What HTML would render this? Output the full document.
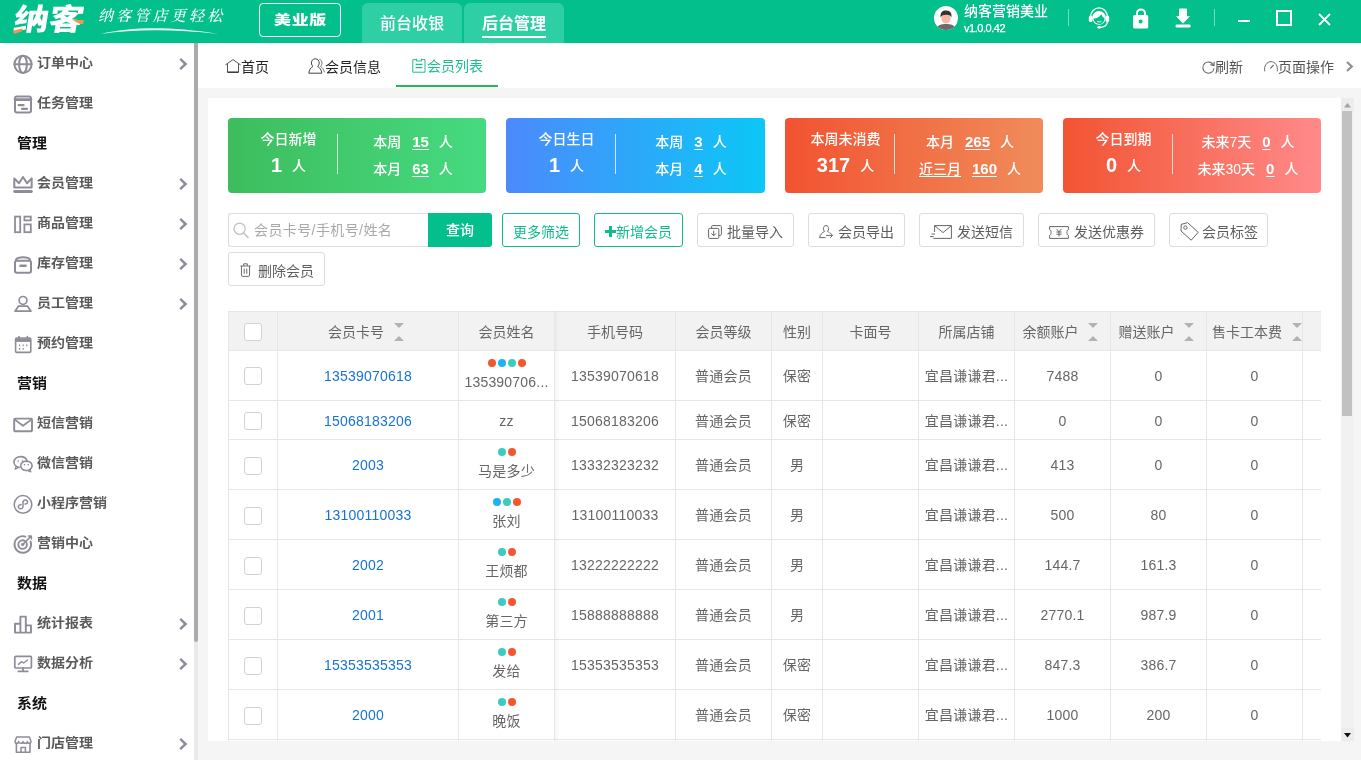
<!DOCTYPE html>
<html lang="zh-CN">
<head>
<meta charset="utf-8">
<title>纳客 - 会员列表</title>
<style>
*{box-sizing:border-box;margin:0;padding:0}
html,body{width:1361px;height:760px;overflow:hidden;background:#f5f5f5}
body{position:relative;will-change:transform;transform:translateZ(0);font-family:"Liberation Sans","Noto Sans CJK SC",sans-serif;font-size:14px;color:#666;line-height:20px}
.abs{position:absolute}
svg{display:block;overflow:visible}
i{font-style:normal}

/* ---------- header ---------- */
#hd{position:absolute;left:0;top:0;width:1361px;height:43px;background:#02bf8b;color:#fff}
#logo{position:absolute;left:14px;top:0px;width:76px;height:40px;font-size:30px;font-weight:900;line-height:40px;white-space:nowrap;transform:skewX(-9deg) scaleX(1.17);transform-origin:0 50%}
#slogan{position:absolute;left:98px;top:5px;width:130px;height:22px;font-family:"Liberation Serif","Noto Serif CJK SC",serif;font-style:italic;font-size:15px;line-height:22px;letter-spacing:3.2px;white-space:nowrap;font-weight:500}
#edition{position:absolute;left:259px;top:3px;width:82px;height:34px;border:1px solid #fff;border-radius:4px;text-align:center}#edition span{display:block;font-size:17px;font-weight:900;line-height:32px;letter-spacing:.6px;padding-left:1px;transform:scaleY(.75);transform-origin:50% 50%}
.htab{position:absolute;top:3px;width:100px;height:40px;background:#2fcfa5;border-radius:6px 6px 0 0;font-size:16px;line-height:42px;text-align:center;font-weight:500}
#uname{position:absolute;left:964px;top:1px;font-size:14px;font-weight:500;line-height:20px;white-space:nowrap}
#uver{position:absolute;left:964px;top:20px;font-size:11px;font-weight:normal;line-height:16px;white-space:nowrap;letter-spacing:-.45px;-webkit-text-stroke:.25px #fff}
.vdiv{position:absolute;top:9px;width:1px;height:17px;background:rgba(255,255,255,.45)}

/* ---------- sidebar ---------- */
#sb{position:absolute;left:0;top:43px;width:194px;height:717px;background:#fff;overflow:hidden}
.mi{position:absolute;left:0;width:194px;height:40px}
.mi .ic{position:absolute;left:13px;top:11px;width:20px;height:20px;fill:none;stroke:#8d8d9a;stroke-width:2;stroke-linejoin:round;stroke-linecap:round}
.mi .tx{position:absolute;left:37px;top:0;line-height:39px;transform:scaleY(.92);transform-origin:0 52%;font-size:14px;font-weight:bold;color:#5a5a5a;white-space:nowrap}
.mi .ar{position:absolute;left:179px;top:15.4px;width:8px;height:12px;fill:none;stroke:#8d8d9a;stroke-width:2.5}
.mh{position:absolute;left:17px;height:40px;line-height:40px;transform:scaleY(.92);transform-origin:0 52%;font-size:15px;font-weight:bold;color:#111;white-space:nowrap}
#sbt{position:absolute;left:194px;top:43px;width:4px;height:717px;background:#e9e9e9}
#sbb{position:absolute;left:194px;top:43px;width:4px;height:599px;background:#ababab;border-radius:0 0 2px 2px}

/* ---------- tab bar ---------- */
#tb{position:absolute;left:198px;top:43px;width:1163px;height:45px;background:#fff}
.tt{position:absolute;top:0;height:45px;line-height:48px;font-size:14px;color:#222;white-space:nowrap}
.tb-ic{position:absolute;fill:none;stroke:#444;stroke-width:1}

/* ---------- panel ---------- */
#pn{position:absolute;left:208px;top:98px;width:1146px;height:643px;background:#fff;overflow:hidden}
.card{position:absolute;top:20px;width:258px;height:75px;border-radius:4px;color:#fff;font-size:14px;font-weight:500}
.card .l{position:absolute;left:0;width:121px;text-align:center;white-space:nowrap}
.card .r{position:absolute;left:110px;width:150px;text-align:center;white-space:nowrap}
.card .dv{position:absolute;left:109px;top:16px;width:1px;height:40px;background:rgba(255,255,255,.75)}
.card .big{font-size:20px;font-weight:bold;margin-right:10px;vertical-align:-1px}
.card u{font-weight:bold;margin:0 10px 0 11px;font-size:15px;text-decoration:underline;text-underline-offset:2px}

.btn{position:absolute;top:115px;height:34px;border:1px solid #ddd;border-radius:3px;background:#fff;font-size:14px;color:#5e5e5e;line-height:36px;white-space:nowrap}
.btn svg{position:absolute;fill:none;stroke:#666;stroke-width:1}
.btn span{position:absolute;top:0}
.btn.g{border-color:#0ebd8c;color:#0ebd8c}

/* ---------- table ---------- */
#tbl{position:absolute;left:20px;top:213px;width:1093px;height:440px;overflow:hidden}
.hr{position:absolute;left:0;top:0;width:1093px;height:40px;background:#f2f2f2}
.vl{position:absolute;top:0;width:1px;height:440px;background:#e6e6e6}
.hl{position:absolute;left:0;width:1093px;height:1px;background:#e6e6e6}
.th{position:absolute;top:0;height:40px;line-height:42px;text-align:center;color:#666;white-space:nowrap}
.td{position:absolute;text-align:center;white-space:nowrap;color:#666;line-height:20px;height:20px;letter-spacing:.2px}
.cb{position:absolute;left:16px;width:18px;height:18px;border:1px solid #d2d2d2;border-radius:3px;background:#fff}
.sort{position:absolute;top:12px;width:10px;height:18px}
.sort:before{content:"";position:absolute;left:0;top:0;border:5px solid transparent;border-top-color:#b2b2b2;border-bottom-width:0}
.sort:after{content:"";position:absolute;left:0;top:13px;border:5px solid transparent;border-bottom-color:#b2b2b2;border-top-width:0}
.lnk{color:#1673d3}
.dots{position:absolute;height:8px;font-size:0;line-height:0;text-align:center}
.dots i{display:inline-block;width:8px;height:8px;border-radius:50%;margin:0 1px}
.d1{background:#f4562e}.d2{background:#1eb0f8}.d3{background:#3ccbbf}
</style>
</head>
<body>

<!-- ================= HEADER ================= -->
<div id="hd">
  <div id="logo">纳客</div>
  <div id="slogan">纳客管店更轻松</div>
  <svg class="abs" style="left:100px;top:26px" width="120" height="10" viewBox="0 0 120 10"><path d="M1 8 C30 1 70 0 118 8 C75 3 35 3 1 8Z" fill="#fff" opacity=".9"/></svg>
  <svg class="abs" style="left:12px;top:18px" width="74" height="18" viewBox="0 0 74 18"><path d="M1 12.4L10.6 10.6L10 13.2L2 16Z" fill="#f5924e"/><path d="M59.6 1.2L72 2.6L71.2 6.2L66.6 5.6Z" fill="#f5924e"/></svg>
  <div id="edition"><span>美业版</span></div>
  <div class="htab" style="left:362px">前台收银</div>
  <div class="htab" style="left:464px;font-weight:bold">后台管理<div class="abs" style="left:18px;top:33px;width:64px;height:2px;background:#fff"></div></div>

  <svg class="abs" style="left:934px;top:6px" width="24" height="24" viewBox="0 0 24 24">
    <defs><clipPath id="avc"><circle cx="12" cy="12" r="12"/></clipPath></defs>
    <circle cx="12" cy="12" r="12" fill="#fff"/>
    <g clip-path="url(#avc)">
      <path d="M2 26 C2 19 7 18 12 18 C17 18 22 19 22 26Z" fill="#6b6b6b"/>
      <ellipse cx="12" cy="12.2" rx="4.6" ry="5.4" fill="#f6b7a5"/>
      <path d="M6.6 11.5 C6 6 9 4.4 12.4 4.6 C16.5 4.6 18 7.5 17.4 11.5 C16.6 9.6 15.6 8.6 12 8.8 C9.2 8.8 7.6 9.4 6.6 11.5Z" fill="#333"/>
    </g>
  </svg>
  <div id="uname">纳客营销美业</div>
  <div id="uver">v1.0.0.42</div>
  <div class="vdiv" style="left:1068px"></div>

  <!-- headset -->
  <svg class="abs" style="left:1088px;top:6px" width="22" height="24" viewBox="0 0 22 24">
    <path d="M2.6 10.8 A8.4 9 0 0 1 19.4 10.8" fill="none" stroke="#fff" stroke-width="1.3"/>
    <circle cx="11" cy="11.8" r="6.9" fill="#fff"/>
    <path d="M5.6 12.6 C8.4 12.4 11.6 11 13.6 8.2 C14.2 10.4 15.4 11.8 16.6 12.2 C16.4 16 14 18 11.2 18 C8.2 18 5.8 16 5.6 12.6Z" fill="#02bf8b"/>
    <path d="M9.2 15.2 C10.4 16.2 12.2 16.2 13.4 15.2" fill="none" stroke="#fff" stroke-width="1"/>
    <rect x="0.8" y="9.4" width="3.6" height="6.6" rx="1.6" fill="#fff"/>
    <rect x="17.6" y="9.4" width="3.6" height="6.6" rx="1.6" fill="#fff"/>
    <path d="M19.4 15.6 C19.2 19.4 16 21.2 12 21.4" fill="none" stroke="#fff" stroke-width="1.2"/>
    <ellipse cx="11.2" cy="21.3" rx="1.9" ry="1.4" fill="#fff"/>
  </svg>
  <!-- lock -->
  <svg class="abs" style="left:1133px;top:8px" width="16" height="21" viewBox="0 0 16 21">
    <path d="M4 8 V5.4 A4 4 0 0 1 12 5.4 V8" fill="none" stroke="#fff" stroke-width="2"/>
    <rect x="0" y="7" width="15.2" height="13.6" rx="1.6" fill="#fff"/>
    <circle cx="7.6" cy="13.6" r="2" fill="#02bf8b"/>
  </svg>
  <!-- download -->
  <svg class="abs" style="left:1175px;top:8px" width="16" height="20" viewBox="0 0 16 20">
    <path d="M5 0.4 H11 Q12 0.4 12 1.4 V8.2 H15 L8 15.6 L1 8.2 H4 V1.4 Q4 0.4 5 0.4Z" fill="#fff"/>
    <rect x="0.6" y="16.4" width="15" height="3" rx="1.2" fill="#fff"/>
  </svg>
  <div class="vdiv" style="left:1214px"></div>
  <!-- window buttons -->
  <div class="abs" style="left:1238px;top:20px;width:12px;height:2px;background:#fff"></div>
  <div class="abs" style="left:1276px;top:10px;width:16px;height:16px;border:2px solid #fff"></div>
  <svg class="abs" style="left:1318px;top:13px" width="13" height="13" viewBox="0 0 13 13"><path d="M1 1 L12 12 M12 1 L1 12" stroke="#fff" stroke-width="1.8" fill="none"/></svg>
</div>

<!-- ================= SIDEBAR ================= -->
<div id="sb">
  <div class="mi" style="top:0px"><svg class="ic" viewBox="0 0 20 20"><circle cx="10" cy="10.3" r="8.6"/><ellipse cx="10" cy="10.3" rx="3.9" ry="8.6"/><path d="M1.4 10.3H18.6"/></svg><span class="tx">订单中心</span><svg class="ar" viewBox="0 0 8 12"><path d="M1.2 0.8L6.6 6L1.2 11.2"/></svg></div>
  <div class="mi" style="top:40px"><svg class="ic" viewBox="0 0 20 20"><rect x="2" y="2.4" width="16" height="16.2" rx="2"/><path d="M2 5.6H18" stroke-width="2.6"/><path d="M5.6 11.2H10.6M9 14.8H14" stroke-width="2.2"/></svg><span class="tx">任务管理</span></div>
  <div class="mh" style="top:80px">管理</div>
  <div class="mi" style="top:120px"><svg class="ic" viewBox="0 0 20 20"><path d="M1.3 4.4L6 9.2L10 3L14 9.2L18.7 4.4V13.4H1.3Z" stroke-width="2"/><path d="M1.6 17.5H18.4" stroke-width="2.8"/></svg><span class="tx">会员管理</span><svg class="ar" viewBox="0 0 8 12"><path d="M1.2 0.8L6.6 6L1.2 11.2"/></svg></div>
  <div class="mi" style="top:160px"><svg class="ic" viewBox="0 0 20 20"><rect x="2" y="2.6" width="5.2" height="15.6" stroke-width="1.8" stroke-linejoin="miter"/><rect x="11.4" y="2.6" width="6.4" height="3.8" stroke-width="1.8" stroke-linejoin="miter"/><rect x="11.4" y="10.4" width="6.4" height="7.8" stroke-width="1.8" stroke-linejoin="miter"/></svg><span class="tx">商品管理</span><svg class="ar" viewBox="0 0 8 12"><path d="M1.2 0.8L6.6 6L1.2 11.2"/></svg></div>
  <div class="mi" style="top:200px"><svg class="ic" viewBox="0 0 20 20"><path d="M3 5.6C5 2.4 15 2.4 17 5.6" /><rect x="2" y="6.8" width="16" height="12" rx="1.8"/><path d="M7.4 11.8H12.6" stroke-width="2.4"/></svg><span class="tx">库存管理</span><svg class="ar" viewBox="0 0 8 12"><path d="M1.2 0.8L6.6 6L1.2 11.2"/></svg></div>
  <div class="mi" style="top:240px"><svg class="ic" viewBox="0 0 20 20"><circle cx="10" cy="6.4" r="3.9" stroke-width="1.7"/><path d="M2 17.2L5.4 12.2H14.6L18 17.2Z" stroke-width="1.7"/></svg><span class="tx">员工管理</span><svg class="ar" viewBox="0 0 8 12"><path d="M1.2 0.8L6.6 6L1.2 11.2"/></svg></div>
  <div class="mi" style="top:280px"><svg class="ic" viewBox="0 0 20 20"><rect x="2.6" y="4" width="15.2" height="14.4" rx="1.2" stroke-width="1.6"/><path d="M2.6 6.2H17.8" stroke-width="3.4" stroke-linecap="butt"/><path d="M6 2.6V5M14.4 2.6V5" stroke-width="1.6"/><path d="M6 11.4H7.2M9.6 11.4H10.8M13.2 11.4H14.4M6 14.8H7.2M9.6 14.8H10.8" stroke-width="1.8" stroke-linecap="butt"/></svg><span class="tx">预约管理</span></div>
  <div class="mh" style="top:320px">营销</div>
  <div class="mi" style="top:360px"><svg class="ic" viewBox="0 0 20 20"><rect x="1.2" y="4.6" width="17.8" height="12.6" rx="0.8" stroke-width="1.9"/><path d="M1.8 5.6L10 11.8L18.4 5.6" stroke-width="1.8"/></svg><span class="tx">短信营销</span></div>
  <div class="mi" style="top:400px"><svg class="ic" viewBox="0 0 20 20"><path d="M6.2 13.4C3.4 13 1 10.8 1 8C1 5 4 2.6 7.6 2.6C10.8 2.6 13.4 4.4 14 6.8" stroke-width="1.6"/><path d="M3.2 12.4L2.2 15.2L5.2 13.6" stroke-width="1.3"/><ellipse cx="13.4" cy="11.8" rx="5.7" ry="4.7" stroke-width="1.6"/><path d="M16.8 15.6L17.8 17.8L14.8 16.6" stroke-width="1.3"/><path d="M5.2 7H5.4M9.4 7H9.6M11.4 10.8H11.6M15.2 10.8H15.4" stroke-width="1.6"/></svg><span class="tx">微信营销</span></div>
  <div class="mi" style="top:440px"><svg class="ic" viewBox="0 0 20 20"><circle cx="10" cy="10.4" r="8.8" stroke-width="1.5"/><path d="M10 12.6C10 15.6 5.2 15.4 5.4 12.6C5.5 11.2 6.8 10.6 8 10.8M10 12.6V8.2C10 5.2 14.8 5.4 14.6 8.2C14.5 9.6 13.2 10.2 12 10" stroke-width="1.5"/></svg><span class="tx">小程序营销</span></div>
  <div class="mi" style="top:480px"><svg class="ic" viewBox="0 0 20 20"><path d="M17.6 7.6A8.3 8.3 0 1 1 12.4 2.6" stroke-width="1.9"/><circle cx="9.6" cy="10.6" r="4.3" stroke-width="1.9"/><circle cx="9.6" cy="10.6" r="1.2" fill="#8d8d9a" stroke-width="1"/><path d="M10 10.2L17.6 2.6M15.4 2H18.4V5" stroke-width="1.5"/></svg><span class="tx">营销中心</span></div>
  <div class="mh" style="top:520px">数据</div>
  <div class="mi" style="top:560px"><svg class="ic" viewBox="0 0 20 20"><path d="M2 18.6V9.8H7.4V2.6H12.8V18.6M12.8 11.4H18V18.6H2M7.4 9.8V18.6" stroke-width="1.9"/></svg><span class="tx">统计报表</span><svg class="ar" viewBox="0 0 8 12"><path d="M1.2 0.8L6.6 6L1.2 11.2"/></svg></div>
  <div class="mi" style="top:600px"><svg class="ic" viewBox="0 0 20 20"><rect x="1.8" y="2.4" width="16.6" height="11.6" rx="1" stroke-width="1.7"/><path d="M10 14V17M5.4 17.4H14.8" stroke-width="1.8"/><path d="M5.4 10.4L8.6 7.6L10.6 9L14.6 6" stroke-width="1.4"/></svg><span class="tx">数据分析</span><svg class="ar" viewBox="0 0 8 12"><path d="M1.2 0.8L6.6 6L1.2 11.2"/></svg></div>
  <div class="mh" style="top:640px">系统</div>
  <div class="mi" style="top:680px"><svg class="ic" viewBox="0 0 20 20"><path d="M3.4 9.6V18.2H17V9.6" stroke-width="1.6"/><path d="M2 7.4L3.6 3H16.4L18 7.4C18 9.8 14.4 9.8 14.4 7.4C14.4 9.8 10 9.8 10 7.4C10 9.8 5.6 9.8 5.6 7.4C5.6 9.8 2 9.8 2 7.4Z" stroke-width="1.5"/><path d="M8 18V13.4H12.4V18" stroke-width="1.5"/></svg><span class="tx">门店管理</span><svg class="ar" viewBox="0 0 8 12"><path d="M1.2 0.8L6.6 6L1.2 11.2"/></svg></div>
</div>
<div id="sbt"></div><div id="sbb"></div>

<!-- ================= TAB BAR ================= -->
<div id="tb">
  <svg class="tb-ic" style="left:27px;top:16px" width="16" height="14" viewBox="0 0 16 14"><path d="M0.3 6L8 0.6L15.7 6" stroke-width=".9"/><path d="M2.5 5V13.2H13.5V5" stroke-width=".9"/><path d="M2.5 13.2H13.5" stroke="#222" stroke-width="1.1"/></svg>
  <div class="tt" style="left:43px">首页</div>
  <svg class="tb-ic" style="left:110px;top:15px" width="17" height="16" viewBox="0 0 17 16"><path d="M7.2 0.8C4.6 0.8 3.4 2.8 3.4 5C3.4 6.6 4.2 7.8 5 8.4C3 9.4 1 12 0.8 15.2H13.8C13.6 12 11.6 9.4 9.6 8.4C10.4 7.8 11.2 6.6 11.2 5C11.2 2.8 9.8 0.8 7.2 0.8Z"/><path d="M11.4 1.2C13.4 1.8 14 3.6 14 5C14 6.4 13.4 7.6 12.4 8.4C14.4 9.4 16 11.6 16.4 14.4" stroke="#777"/></svg>
  <div class="tt" style="left:127px">会员信息</div>
  <svg class="tb-ic" style="left:214px;top:15px;stroke:#1bbf8e" width="14" height="15" viewBox="0 0 14 15"><path d="M4.2 1.6H0.8V14.2H13V1.6H9.6"/><path d="M4.4 0.6V3H9.4V0.6" /><path d="M3.6 6.4H10.4M3.6 9.6H10.4" stroke-width="1.1"/></svg>
  <div class="tt" style="left:229px;color:#1bbf8e;line-height:46px">会员列表</div>
  <div class="abs" style="left:198px;top:42px;width:102px;height:2px;background:#2db55d"></div>

  <svg class="tb-ic" style="left:1004px;top:18px;stroke:#666" width="13" height="13" viewBox="0 0 13 13"><path d="M11.6 4.4A5.6 5.6 0 1 0 12 7.2" stroke-width="1.1"/><path d="M8.4 3.6L12 4.6L12.2 0.8" stroke-width="1.1"/></svg>
  <div class="tt" style="left:1017px;color:#555">刷新</div>
  <svg class="tb-ic" style="left:1066px;top:18px;stroke:#666" width="14" height="11" viewBox="0 0 14 11"><path d="M0.8 10.4C-0.4 5 3 0.6 7 0.6C11 0.6 14.4 5 13.2 10.4" stroke-width="1"/><path d="M6.4 7.4L9.6 4" stroke-width="1.1"/></svg>
  <div class="tt" style="left:1080px;color:#555">页面操作</div>
  <svg class="abs" style="left:1148px;top:18px" width="8" height="11" viewBox="0 0 8 11"><path d="M1 1L5.8 5.5L1 10" fill="none" stroke="#8d8d9a" stroke-width="2.2"/></svg>
</div>

<!-- ================= PANEL ================= -->
<div id="pn">
  <div class="card" style="left:20px;background:linear-gradient(90deg,#3dbd5d,#46da80)">
    <div class="l" style="top:11px">今日新增</div>
    <div class="l" style="top:37px"><span class="big">1</span>人</div>
    <div class="dv"></div>
    <div class="r" style="top:14px">本周<u>15</u>人</div>
    <div class="r" style="top:41px">本月<u>63</u>人</div>
  </div>
  <div class="card" style="left:298px;width:259px;background:linear-gradient(90deg,#4c8afc,#0cc7f6)">
    <div class="l" style="top:11px">今日生日</div>
    <div class="l" style="top:37px"><span class="big">1</span>人</div>
    <div class="dv"></div>
    <div class="r" style="top:14px">本周<u>3</u>人</div>
    <div class="r" style="top:41px">本月<u>4</u>人</div>
  </div>
  <div class="card" style="left:577px;background:linear-gradient(90deg,#f25331,#f08c5a)">
    <div class="l" style="top:11px">本周未消费</div>
    <div class="l" style="top:37px"><span class="big">317</span>人</div>
    <div class="dv"></div>
    <div class="r" style="top:14px">本月<u>265</u>人</div>
    <div class="r" style="top:41px"><span style="text-decoration:underline;text-underline-offset:2px">近三月</span><u>160</u>人</div>
  </div>
  <div class="card" style="left:855px;background:linear-gradient(90deg,#f25432,#ff8a8a)">
    <div class="l" style="top:11px">今日到期</div>
    <div class="l" style="top:37px"><span class="big">0</span>人</div>
    <div class="dv"></div>
    <div class="r" style="top:14px">未来7天<u>0</u>人</div>
    <div class="r" style="top:41px">未来30天<u>0</u>人</div>
  </div>

  <!-- toolbar -->
  <div class="abs" style="left:20px;top:115px;width:200px;height:34px;border:1px solid #ddd;border-right:0;border-radius:3px 0 0 3px;background:#fff">
    <svg class="abs" style="left:4px;top:8px" width="16" height="16" viewBox="0 0 16 16"><circle cx="6.6" cy="6.8" r="5.6" fill="none" stroke="#c4c4c4" stroke-width="1.4"/><path d="M10.6 11L15 15.4" stroke="#c4c4c4" stroke-width="1.6" stroke-linecap="round"/></svg>
    <div class="abs" style="left:25px;top:0;line-height:33px;color:#a9a9a9;white-space:nowrap;letter-spacing:.4px">会员卡号/手机号/姓名</div>
  </div>
  <div class="abs" style="left:220px;top:115px;width:64px;height:34px;background:#02bf8b;border-radius:0 3px 3px 0;color:#fff;text-align:center;line-height:35px;font-weight:500">查询</div>
  <div class="btn g" style="left:294px;width:78px"><span style="left:10px">更多筛选</span></div>
  <div class="btn g" style="left:386px;width:89px"><svg style="left:10px;top:12px" width="11" height="11" viewBox="0 0 11 11"><path d="M5.5 0V11M0 5.5H11" stroke="#0ebd8c" stroke-width="3"/></svg><span style="left:21px">新增会员</span></div>
  <div class="btn" style="left:489px;width:97px"><svg style="left:10px;top:11px" width="14" height="14" viewBox="0 0 14 14"><path d="M3.6 3V1.6Q3.6 0.6 4.6 0.6H12.4Q13.4 0.6 13.4 1.6V9.4Q13.4 10.4 12.4 10.4H11"/><rect x="0.6" y="3.4" width="10.2" height="10" rx="1"/><path d="M5.7 5.6V10.6M3.4 8.4L5.7 10.8L8 8.4"/></svg><span style="left:29px">批量导入</span></div>
  <div class="btn" style="left:600px;width:97px"><svg style="left:10px;top:11px" width="15" height="14" viewBox="0 0 15 14"><path d="M7 0.6C5.2 0.6 4.4 2 4.4 3.6C4.4 4.8 5 5.8 5.6 6.4C3.4 7.4 1 9.6 0.6 12.6H6.6"/><path d="M7 0.6C8.8 0.6 9.6 2 9.6 3.6C9.6 4.8 9 5.8 8.4 6.4C9.2 6.8 10 7.4 10.6 8"/><path d="M7.2 10.4H13.6M11.2 8L13.6 10.4L11.2 12.8"/></svg><span style="left:29px">会员导出</span></div>
  <div class="btn" style="left:711px;width:105px"><svg style="left:10px;top:11px" width="22" height="14" viewBox="0 0 22 14"><path d="M4.6 7V0.6H21.4V13.4H3.4"/><path d="M4.8 0.8L13 7.6L21.2 0.8"/><path d="M1.6 9H5M0 11.6H3.6"/></svg><span style="left:37px">发送短信</span></div>
  <div class="btn" style="left:830px;width:117px"><svg style="left:10px;top:12px" width="20" height="13" viewBox="0 0 20 13"><path d="M0.6 0.6H19.4V3.6C17.4 4.2 17.4 8.8 19.4 9.4V12.4H0.6V9.4C2.6 8.8 2.6 4.2 0.6 3.6Z"/><path d="M7.6 3L10 5.8L12.4 3M10 5.8V10.4M7.4 6H12.6M7.4 8.2H12.6"/></svg><span style="left:35px">发送优惠券</span></div>
  <div class="btn" style="left:961px;width:99px"><svg style="left:10px;top:8px" width="19" height="19" viewBox="0 0 19 19"><path d="M1.2 2.4L7.6 0.6L18.2 10.4L11.2 18.2L1 9Z"/><circle cx="5.4" cy="5.6" r="1.7"/></svg><span style="left:32px">会员标签</span></div>
  <div class="btn" style="left:20px;top:154px;width:97px"><svg style="left:11px;top:10px" width="11" height="14" viewBox="0 0 12 14" preserveAspectRatio="none"><path d="M0.4 3H11.6M4 2.8V0.8H8V2.8"/><path d="M1.6 3V12Q1.6 13.4 3 13.4H9Q10.4 13.4 10.4 12V3"/><path d="M4.6 5.6V10.8M7.4 5.6V10.8"/></svg><span style="left:29px">删除会员</span></div>

  <!-- table -->
  <div id="tbl">
    <div class="hr"></div>
    <div class="cb" style="top:12px"></div>
    <div class="th" style="left:100.0px;width:58px;text-align:left">会员卡号</div><div class="sort" style="left:166.0px"></div>
    <div class="th" style="left:231px;width:95px">会员姓名</div>
    <div class="th" style="left:327px;width:120px">手机号码</div>
    <div class="th" style="left:448px;width:95px">会员等级</div>
    <div class="th" style="left:544px;width:50px">性别</div>
    <div class="th" style="left:595px;width:95px">卡面号</div>
    <div class="th" style="left:691px;width:95px">所属店铺</div>
    <div class="th" style="left:794.5px;width:58px;text-align:left">余额账户</div><div class="sort" style="left:860.0px"></div>
    <div class="th" style="left:890.5px;width:58px;text-align:left">赠送账户</div><div class="sort" style="left:956.0px"></div>
    <div class="th" style="left:984.0px;width:72px;text-align:left">售卡工本费</div><div class="sort" style="left:1064.0px"></div>
    <div class="cb" style="top:56px"></div>
    <div class="td lnk" style="left:50px;width:180px;top:54.5px">13539070618</div>
    <div class="td" style="left:327px;width:120px;top:54.5px">13539070618</div>
    <div class="td" style="left:448px;width:95px;top:54.5px">普通会员</div>
    <div class="td" style="left:544px;width:50px;top:54.5px">保密</div>
    <div class="td" style="left:691px;width:95px;top:54.5px">宜昌谦谦君...</div>
    <div class="td" style="left:787px;width:95px;top:54.5px">7488</div>
    <div class="td" style="left:883px;width:95px;top:54.5px">0</div>
    <div class="td" style="left:979px;width:95px;top:54.5px">0</div>
    <div class="dots" style="left:231px;width:95px;top:48.0px"><i class="d1"></i><i class="d2"></i><i class="d3"></i><i class="d1"></i></div>
    <div class="td" style="left:231px;width:95px;top:61.0px">135390706...</div>
    <div class="cb" style="top:101px"></div>
    <div class="td lnk" style="left:50px;width:180px;top:99.5px">15068183206</div>
    <div class="td" style="left:327px;width:120px;top:99.5px">15068183206</div>
    <div class="td" style="left:448px;width:95px;top:99.5px">普通会员</div>
    <div class="td" style="left:544px;width:50px;top:99.5px">保密</div>
    <div class="td" style="left:691px;width:95px;top:99.5px">宜昌谦谦君...</div>
    <div class="td" style="left:787px;width:95px;top:99.5px">0</div>
    <div class="td" style="left:883px;width:95px;top:99.5px">0</div>
    <div class="td" style="left:979px;width:95px;top:99.5px">0</div>
    <div class="td" style="left:231px;width:95px;top:99.5px">zz</div>
    <div class="cb" style="top:146px"></div>
    <div class="td lnk" style="left:50px;width:180px;top:144.0px">2003</div>
    <div class="td" style="left:327px;width:120px;top:144.0px">13332323232</div>
    <div class="td" style="left:448px;width:95px;top:144.0px">普通会员</div>
    <div class="td" style="left:544px;width:50px;top:144.0px">男</div>
    <div class="td" style="left:691px;width:95px;top:144.0px">宜昌谦谦君...</div>
    <div class="td" style="left:787px;width:95px;top:144.0px">413</div>
    <div class="td" style="left:883px;width:95px;top:144.0px">0</div>
    <div class="td" style="left:979px;width:95px;top:144.0px">0</div>
    <div class="dots" style="left:231px;width:95px;top:137.0px"><i class="d3"></i><i class="d1"></i></div>
    <div class="td" style="left:231px;width:95px;top:150.0px">马是多少</div>
    <div class="cb" style="top:196px"></div>
    <div class="td lnk" style="left:50px;width:180px;top:194.0px">13100110033</div>
    <div class="td" style="left:327px;width:120px;top:194.0px">13100110033</div>
    <div class="td" style="left:448px;width:95px;top:194.0px">普通会员</div>
    <div class="td" style="left:544px;width:50px;top:194.0px">男</div>
    <div class="td" style="left:691px;width:95px;top:194.0px">宜昌谦谦君...</div>
    <div class="td" style="left:787px;width:95px;top:194.0px">500</div>
    <div class="td" style="left:883px;width:95px;top:194.0px">80</div>
    <div class="td" style="left:979px;width:95px;top:194.0px">0</div>
    <div class="dots" style="left:231px;width:95px;top:187.0px"><i class="d2"></i><i class="d3"></i><i class="d1"></i></div>
    <div class="td" style="left:231px;width:95px;top:200.0px">张刘</div>
    <div class="cb" style="top:246px"></div>
    <div class="td lnk" style="left:50px;width:180px;top:244.0px">2002</div>
    <div class="td" style="left:327px;width:120px;top:244.0px">13222222222</div>
    <div class="td" style="left:448px;width:95px;top:244.0px">普通会员</div>
    <div class="td" style="left:544px;width:50px;top:244.0px">男</div>
    <div class="td" style="left:691px;width:95px;top:244.0px">宜昌谦谦君...</div>
    <div class="td" style="left:787px;width:95px;top:244.0px">144.7</div>
    <div class="td" style="left:883px;width:95px;top:244.0px">161.3</div>
    <div class="td" style="left:979px;width:95px;top:244.0px">0</div>
    <div class="dots" style="left:231px;width:95px;top:237.0px"><i class="d3"></i><i class="d1"></i></div>
    <div class="td" style="left:231px;width:95px;top:250.0px">王烦都</div>
    <div class="cb" style="top:296px"></div>
    <div class="td lnk" style="left:50px;width:180px;top:294.0px">2001</div>
    <div class="td" style="left:327px;width:120px;top:294.0px">15888888888</div>
    <div class="td" style="left:448px;width:95px;top:294.0px">普通会员</div>
    <div class="td" style="left:544px;width:50px;top:294.0px">男</div>
    <div class="td" style="left:691px;width:95px;top:294.0px">宜昌谦谦君...</div>
    <div class="td" style="left:787px;width:95px;top:294.0px">2770.1</div>
    <div class="td" style="left:883px;width:95px;top:294.0px">987.9</div>
    <div class="td" style="left:979px;width:95px;top:294.0px">0</div>
    <div class="dots" style="left:231px;width:95px;top:287.0px"><i class="d3"></i><i class="d1"></i></div>
    <div class="td" style="left:231px;width:95px;top:300.0px">第三方</div>
    <div class="cb" style="top:346px"></div>
    <div class="td lnk" style="left:50px;width:180px;top:344.0px">15353535353</div>
    <div class="td" style="left:327px;width:120px;top:344.0px">15353535353</div>
    <div class="td" style="left:448px;width:95px;top:344.0px">普通会员</div>
    <div class="td" style="left:544px;width:50px;top:344.0px">保密</div>
    <div class="td" style="left:691px;width:95px;top:344.0px">宜昌谦谦君...</div>
    <div class="td" style="left:787px;width:95px;top:344.0px">847.3</div>
    <div class="td" style="left:883px;width:95px;top:344.0px">386.7</div>
    <div class="td" style="left:979px;width:95px;top:344.0px">0</div>
    <div class="dots" style="left:231px;width:95px;top:337.0px"><i class="d3"></i><i class="d1"></i></div>
    <div class="td" style="left:231px;width:95px;top:350.0px">发给</div>
    <div class="cb" style="top:396px"></div>
    <div class="td lnk" style="left:50px;width:180px;top:394.0px">2000</div>
    <div class="td" style="left:448px;width:95px;top:394.0px">普通会员</div>
    <div class="td" style="left:544px;width:50px;top:394.0px">保密</div>
    <div class="td" style="left:691px;width:95px;top:394.0px">宜昌谦谦君...</div>
    <div class="td" style="left:787px;width:95px;top:394.0px">1000</div>
    <div class="td" style="left:883px;width:95px;top:394.0px">200</div>
    <div class="td" style="left:979px;width:95px;top:394.0px">0</div>
    <div class="dots" style="left:231px;width:95px;top:387.0px"><i class="d3"></i><i class="d1"></i></div>
    <div class="td" style="left:231px;width:95px;top:400.0px">晚饭</div>
    <div class="hl" style="top:0"></div><div class="hl" style="top:39px"></div>
    <div class="hl" style="top:89px"></div>
    <div class="hl" style="top:128px"></div>
    <div class="hl" style="top:178px"></div>
    <div class="hl" style="top:228px"></div>
    <div class="hl" style="top:278px"></div>
    <div class="hl" style="top:328px"></div>
    <div class="hl" style="top:378px"></div>
    <div class="hl" style="top:428px"></div>
    <div class="vl" style="left:0px"></div>
    <div class="vl" style="left:49px"></div>
    <div class="vl" style="left:230px"></div>
    <div class="vl" style="left:326px"></div>
    <div class="vl" style="left:447px"></div>
    <div class="vl" style="left:543px"></div>
    <div class="vl" style="left:594px"></div>
    <div class="vl" style="left:690px"></div>
    <div class="vl" style="left:786px"></div>
    <div class="vl" style="left:882px"></div>
    <div class="vl" style="left:978px"></div>
    <div class="vl" style="left:1074px"></div>
    <div class="abs" style="left:327px;top:0;width:5px;height:440px;background:linear-gradient(90deg,rgba(0,0,0,.035),rgba(0,0,0,0))"></div>
  </div>
  <!-- scrollbar -->
  <div class="abs" style="left:1133px;top:0;width:13px;height:643px;background:#f1f1f1"></div>
  <div class="abs" style="left:1133px;top:0;width:13px;height:13px;background:#ececec"></div>
  <div class="abs" style="left:1133px;top:630px;width:13px;height:13px;background:#ececec"></div>
  <div class="abs" style="left:1134px;top:13px;width:10px;height:305px;background:#c1c1c1"></div>
  <svg class="abs" style="left:1136px;top:4.6px" width="7" height="4.4" viewBox="0 0 7 4.4"><path d="M0 4.4L3.5 0L7 4.4Z" fill="#a3a3a3"/></svg>
  <svg class="abs" style="left:1136px;top:634.6px" width="7" height="4.4" viewBox="0 0 7 4.4"><path d="M0 0L3.5 4.4L7 0Z" fill="#111"/></svg>
</div>

</body>
</html>
